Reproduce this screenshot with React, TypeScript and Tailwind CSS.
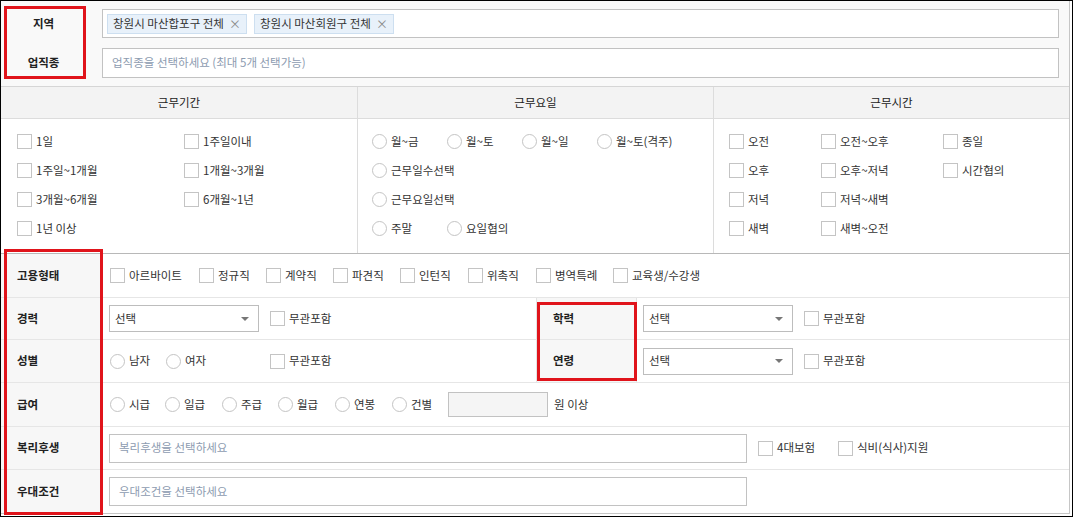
import React from "react";

const FONT = { fontFamily: '"Noto Sans CJK KR", "Noto Sans", sans-serif' };

function Check({ label, className = "" }: { label: string; className?: string }) {
  return (
    <label className={`flex items-center gap-[4px] ${className}`}>
      <span className="w-[15px] h-[15px] shrink-0 border border-[#c4c4c4] bg-white" />
      <span>{label}</span>
    </label>
  );
}

function Radio({ label, className = "" }: { label: string; className?: string }) {
  return (
    <label className={`flex items-center gap-[4px] ${className}`}>
      <span className="w-[15px] h-[15px] shrink-0 rounded-full border border-[#c4c4c4] bg-white" />
      <span>{label}</span>
    </label>
  );
}

function Select({ className = "" }: { className?: string }) {
  return (
    <div
      className={`flex items-center justify-between w-[150px] h-[27px] border border-[#bdbdbd] bg-white pl-[5px] pr-[9px] ${className}`}
    >
      <span>선택</span>
      <span className="w-0 h-0 border-l-[4px] border-r-[4px] border-t-[4px] border-l-transparent border-r-transparent border-t-[#777]" />
    </div>
  );
}

function Tag({ text }: { text: string }) {
  return (
    <span className="flex items-center h-[20px] px-[5px] gap-[5px] bg-[#e8f1fa] border border-[#cddff0] text-[#333]">
      {text}
      <span className="text-[#8a8a8a] text-[12px] leading-none">×</span>
    </span>
  );
}

function RowLabel({ children }: { children: React.ReactNode }) {
  return (
    <div className="w-[100px] shrink-0 h-full flex items-center pl-[16px] bg-[#f7f7f7] border-r border-[#e3e3e3] font-semibold text-[#222]">
      {children}
    </div>
  );
}

function SideLabel({ children }: { children: React.ReactNode }) {
  return (
    <div className="w-[101px] h-full flex items-center pl-[16px] bg-[#f7f7f7] border-l border-r border-[#e3e3e3] font-semibold text-[#222]">
      {children}
    </div>
  );
}

export default function App() {
  return (
    <div
      className="relative w-[1073px] h-[517px] border border-black bg-white text-[11.5px] text-[#333] overflow-hidden"
      style={FONT}
    >
      <div className="mr-[2px] h-[513px] border-r border-b border-[#c6c6c6]">
        {/* 지역 / 업직종 */}
        <div className="h-[86px] bg-[#f9f9f9] border-b border-[#d6d6d6] flex">
          <div className="w-[85px] flex flex-col items-center font-semibold text-[#222]">
            <div className="h-[29px] mt-[8px] flex items-center">지역</div>
            <div className="h-[29px] mt-[10px] flex items-center">업직종</div>
          </div>
          <div className="flex-1 ml-[16px] mr-[10px] flex flex-col">
            <div className="h-[29px] mt-[8px] border border-[#c2c2c2] bg-white flex items-center gap-[7px] pl-[4px]">
              <Tag text="창원시 마산합포구 전체" />
              <Tag text="창원시 마산회원구 전체" />
            </div>
            <div className="h-[30px] mt-[10px] border border-[#c2c2c2] bg-white flex items-center pl-[9px] text-[#8d9bb0]">
              업직종을 선택하세요 (최대 5개 선택가능)
            </div>
          </div>
        </div>

        {/* 근무기간 / 근무요일 / 근무시간 */}
        <div className="grid grid-cols-[356px_356px_1fr] h-[32px] bg-[#f3f3f3] border-b border-[#dcdcdc] text-[#222]">
          <div className="flex items-center justify-center">근무기간</div>
          <div className="flex items-center justify-center border-l border-[#dcdcdc]">근무요일</div>
          <div className="flex items-center justify-center border-l border-[#dcdcdc]">근무시간</div>
        </div>
        <div className="grid grid-cols-[356px_356px_1fr] h-[135px] border-b border-[#b8b8b8]">
          <div className="pl-[16px] pt-[8px] grid grid-cols-[167px_1fr] auto-rows-[29px] items-center content-start">
            <Check label="1일" />
            <Check label="1주일이내" />
            <Check label="1주일~1개월" />
            <Check label="1개월~3개월" />
            <Check label="3개월~6개월" />
            <Check label="6개월~1년" />
            <Check label="1년 이상" />
          </div>
          <div className="border-l border-[#dcdcdc] pl-[14px] pt-[8px] flex flex-col">
            <div className="h-[29px] flex items-center">
              <Radio label="월~금" className="w-[75px]" />
              <Radio label="월~토" className="w-[75px]" />
              <Radio label="월~일" className="w-[75px]" />
              <Radio label="월~토(격주)" />
            </div>
            <div className="h-[29px] flex items-center">
              <Radio label="근무일수선택" />
            </div>
            <div className="h-[29px] flex items-center">
              <Radio label="근무요일선택" />
            </div>
            <div className="h-[29px] flex items-center">
              <Radio label="주말" className="w-[75px]" />
              <Radio label="요일협의" />
            </div>
          </div>
          <div className="border-l border-[#dcdcdc] pl-[15px] pt-[8px] grid grid-cols-[92px_122px_1fr] auto-rows-[29px] items-center content-start">
            <Check label="오전" />
            <Check label="오전~오후" />
            <Check label="종일" />
            <Check label="오후" />
            <Check label="오후~저녁" />
            <Check label="시간협의" />
            <Check label="저녁" />
            <Check label="저녁~새벽" />
            <span />
            <Check label="새벽" />
            <Check label="새벽~오전" />
          </div>
        </div>

        {/* 고용형태 */}
        <div className="h-[44px] flex items-center border-b border-[#e6e6e6]">
          <RowLabel>고용형태</RowLabel>
          <div className="flex items-center pl-[9px]">
            <Check label="아르바이트" className="w-[89px]" />
            <Check label="정규직" className="w-[67px]" />
            <Check label="계약직" className="w-[67px]" />
            <Check label="파견직" className="w-[67px]" />
            <Check label="인턴직" className="w-[68px]" />
            <Check label="위촉직" className="w-[68px]" />
            <Check label="병역특례" className="w-[77px]" />
            <Check label="교육생/수강생" />
          </div>
        </div>

        {/* 경력 / 학력 */}
        <div className="h-[42px] flex items-center border-b border-[#e6e6e6]">
          <RowLabel>경력</RowLabel>
          <div className="w-[435px] flex items-center pl-[8px]">
            <Select />
            <Check label="무관포함" className="ml-[11px]" />
          </div>
          <SideLabel>학력</SideLabel>
          <div className="flex items-center pl-[6px]">
            <Select />
            <Check label="무관포함" className="ml-[11px]" />
          </div>
        </div>

        {/* 성별 / 연령 */}
        <div className="h-[43px] flex items-center border-b border-[#e6e6e6]">
          <RowLabel>성별</RowLabel>
          <div className="w-[435px] flex items-center pl-[9px]">
            <Radio label="남자" className="w-[56px]" />
            <Radio label="여자" className="w-[104px]" />
            <Check label="무관포함" />
          </div>
          <SideLabel>연령</SideLabel>
          <div className="flex items-center pl-[6px]">
            <Select />
            <Check label="무관포함" className="ml-[11px]" />
          </div>
        </div>

        {/* 급여 */}
        <div className="h-[44px] flex items-center border-b border-[#e6e6e6]">
          <RowLabel>급여</RowLabel>
          <div className="flex items-center pl-[9px]">
            <Radio label="시급" className="w-[55px]" />
            <Radio label="일급" className="w-[57px]" />
            <Radio label="주급" className="w-[56px]" />
            <Radio label="월급" className="w-[57px]" />
            <Radio label="연봉" className="w-[57px]" />
            <Radio label="건별" className="w-[56px]" />
            <div className="w-[100px] h-[25px] border border-[#c2c2c2] bg-[#f5f5f5]" />
            <span className="ml-[6px]">원 이상</span>
          </div>
        </div>

        {/* 복리후생 */}
        <div className="h-[43px] flex items-center border-b border-[#e6e6e6]">
          <RowLabel>복리후생</RowLabel>
          <div className="flex items-center pl-[8px]">
            <div className="w-[638px] h-[29px] border border-[#c2c2c2] bg-white flex items-center pl-[9px] text-[#8d9bb0]">
              복리후생을 선택하세요
            </div>
            <Check label="4대보험" className="ml-[11px] w-[80px]" />
            <Check label="식비(식사)지원" />
          </div>
        </div>

        {/* 우대조건 */}
        <div className="h-[43px] flex items-center">
          <RowLabel>우대조건</RowLabel>
          <div className="flex items-center pl-[8px]">
            <div className="w-[638px] h-[29px] border border-[#c2c2c2] bg-white flex items-center pl-[9px] text-[#8d9bb0]">
              우대조건을 선택하세요
            </div>
          </div>
        </div>
      </div>

      {/* annotation boxes */}
      <div className="absolute left-[3px] top-[5px] w-[82px] h-[73px] border-[3px] border-[#e0141b]" />
      <div className="absolute left-[3px] top-[248px] w-[99px] h-[266px] border-[3px] border-[#e0141b]" />
      <div className="absolute left-[536px] top-[301px] w-[100px] h-[79px] border-[3px] border-[#e0141b]" />
    </div>
  );
}
